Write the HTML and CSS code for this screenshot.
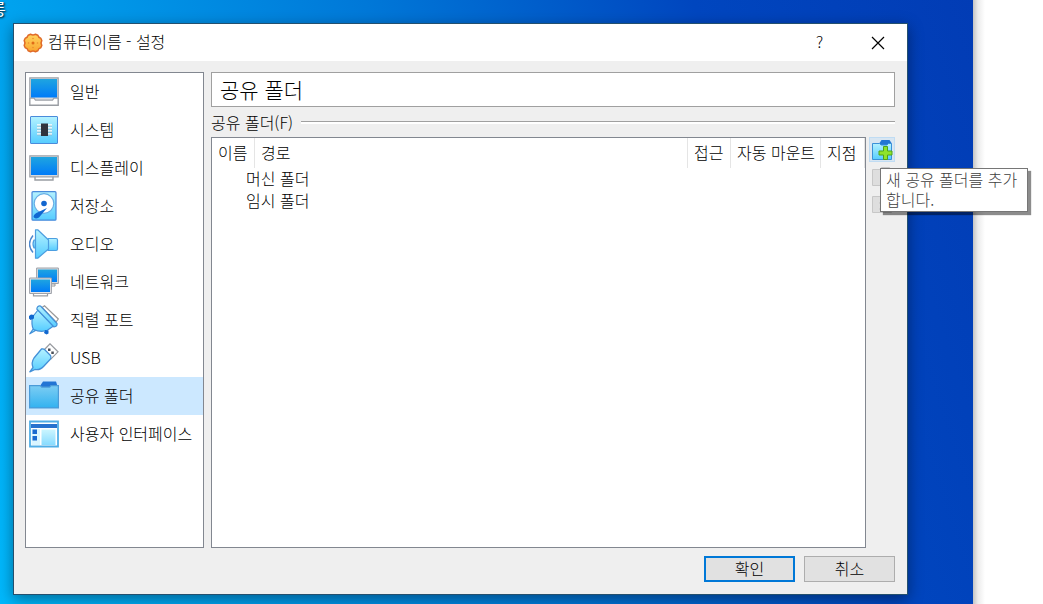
FILE: index.html
```html
<!DOCTYPE html>
<html lang="ko">
<head>
<meta charset="utf-8">
<title>컴퓨터이름 - 설정</title>
<link rel="stylesheet" href="styles.css">
</head>
<body>
<svg class="defs" aria-hidden="true">
  <defs>
    <linearGradient id="screen" x1="0" y1="0" x2="0" y2="1"><stop offset="0" stop-color="#1fa5e0"/><stop offset="1" stop-color="#007bf8"/></linearGradient>
    <linearGradient id="cyan" x1="0" y1="0" x2="0" y2="1"><stop offset="0" stop-color="#b5f2ff"/><stop offset="1" stop-color="#55ccff"/></linearGradient>
    <linearGradient id="folder" x1="0" y1="0" x2="0" y2="1"><stop offset="0" stop-color="#7dcdf3"/><stop offset="1" stop-color="#32b2f0"/></linearGradient>
    <linearGradient id="gear" x1="0" y1="0" x2="0" y2="1"><stop offset="0" stop-color="#ffd45f"/><stop offset="1" stop-color="#f9a52e"/></linearGradient>
  </defs>
</svg>
<div class="screen">
  <div class="desktop">
    <span class="shortcut">롱</span>
    <section class="dialog" role="dialog" aria-labelledby="title">
      <header class="titlebar">
        <svg class="gear" viewBox="0 0 20 20"><path d="M7.500 1.200Q10 2.800 12.500 1.200L14.800 2.200Q15.300 4.700 17.800 5.200L18.800 7.500Q17.200 10 18.800 12.500L17.800 14.800Q15.300 15.300 14.800 17.800L12.500 18.800Q10 17.200 7.500 18.800L5.200 17.800Q4.700 15.300 2.200 14.800L1.200 12.500Q2.800 10 1.200 7.500L2.200 5.200Q4.700 4.700 5.200 2.200z" fill="url(#gear)" stroke="#e06a28" stroke-width="1.500" stroke-linejoin="round"/><circle cx="10" cy="10" r="1.500" fill="#e06c18"/><g fill="#eb8d2b"><circle cx="10" cy="5.500" r=".8"/><circle cx="10" cy="14.500" r=".8"/><circle cx="5.500" cy="10" r=".8"/><circle cx="14.500" cy="10" r=".8"/></g></svg>
        <h1 class="title" id="title">컴퓨터이름 - 설정</h1>
        <button class="caption-button" type="button" aria-label="도움말"><span class="help">?</span></button>
        <button class="caption-button" type="button" aria-label="닫기"><svg width="14" height="14" viewBox="0 0 14 14"><path d="M1 1l12 12M13 1L1 13" stroke="#000" stroke-width="1.2"/></svg></button>
      </header>
      <div class="content">
        <nav class="categories">
          <button class="category" type="button"><svg class="icon" viewBox="0 0 30 30"><path d="M.8 21v7.2h28.4V21" fill="#fff" stroke="#999da3" stroke-width="1.4"/><path d="M.8.8h28.4v20.4H25l-1.500 2h-17l-1.500-2H.8z" fill="#d7dade" stroke="#9ea2a9" stroke-width="1.2"/><path d="M2 2h26v18.500H2z" fill="url(#screen)"/></svg><span>일반</span></button>
          <button class="category" type="button"><svg class="icon" viewBox="0 0 30 30"><rect x="1.500" y="1.500" width="27" height="27" rx=".5" fill="url(#cyan)" stroke="#4a8bdb"/><path d="M8 10h15M8 13h15M8 16h15M8 19h15" stroke="#fff" stroke-width="1.500"/><path d="M8 11h15M8 14h15M8 17h15M8 20h15" stroke="#9aa8b5" stroke-width=".6"/><path d="M12 8.500h7v12.500h-7z" fill="#30343e"/></svg><span>시스템</span></button>
          <button class="category" type="button"><svg class="icon" viewBox="0 0 30 30"><path d="M6 22v5h18v-5" fill="#fff" stroke="#999da3" stroke-width="1.4"/><path d="M.8 2.800h28.400v21H.8z" fill="#d7dade" stroke="#9ea2a9" stroke-width="1.2"/><path d="M2 4h26v18H2z" fill="url(#screen)"/></svg><span>디스플레이</span></button>
          <button class="category" type="button"><svg class="icon" viewBox="0 0 30 30"><rect x="3" y=".7" width="24" height="28.500" rx="1" fill="url(#cyan)" stroke="#4a8bdb" stroke-width="1.2"/><circle cx="15" cy="12.500" r="9.800" fill="#fff" stroke="#68aee5" stroke-width="1.2"/><circle cx="15" cy="12.500" r="2.800" fill="#1266cf"/><path d="M18 17l-8 9.500q-4 2-5.500-.5 0-3 5-5z" fill="#0f67d2"/></svg><span>저장소</span></button>
          <button class="category" type="button"><svg class="icon" viewBox="0 0 30 30"><g fill="url(#cyan)" stroke="#4c9ee0" stroke-width="1.200" stroke-linejoin="round"><path d="M6.500 11H5q-2 4 0 8h1.500z"/><path d="M19 9.500h8q1.500 0 1.500 1.500v9q0 1.500-1.500 1.500h-8z"/><path d="M6.500.8h2.200L19.500 11v9L8.700 29.200H6.500z"/></g><path d="M4 6.500q-7 8.500 0 17" fill="none" stroke="#4b86cd" stroke-width="1.400"/></svg><span>오디오</span></button>
          <button class="category" type="button"><svg class="icon" viewBox="0 0 30 30"><path d="M21 17h5v2h-5z" fill="#fff" stroke="#999"/><path d="M7.600 1h21.800v15.500H7.600z" fill="#d7dade" stroke="#9ea2a9"/><path d="M9 2.500h19V15H9z" fill="url(#screen)"/><path d="M4.500 26v2.800h14V26" fill="#fff" stroke="#999da3" stroke-width="1.200"/><path d="M.6 11h21.800v15.500H.6z" fill="#e3e5e8" stroke="#9ea2a9"/><path d="M2 12.500h19V25H2z" fill="url(#screen)"/></svg><span>네트워크</span></button>
          <button class="category" type="button"><svg class="icon" viewBox="0 0 30 30"><path d="M13 2.500L15.500.8 29.300 14l-2.300 3z" fill="#fff" stroke="#999" stroke-width="1.200"/><g fill="url(#cyan)" stroke="#4390d8" stroke-width="1.200" stroke-linejoin="round"><path d="M.8 28.800l3.700-5.300 2 2z"/><path d="M9 5L3.500 12q-1.500 8 1 12.500 7 3 13.500 1l6.500-4.500z"/><path d="M7.800 4q.5-3.500 3.700-3l16.500 17.500q.5 3-3 3.500z"/></g><path d="M2 9.500l3 .5v3.500L1.500 15 0 13.500V11zM16 25l3.500.5v3L17.500 29.500 15 28z" fill="#1168cf"/></svg><span>직렬 포트</span></button>
          <button class="category" type="button"><svg class="icon" viewBox="0 0 30 30"><path d="M14.500 7.500L21 .8l8 8-7 7z" fill="#fff" stroke="#96999e" stroke-width="1.200"/><path d="M19 5.500h2.500V8H19zM22.300 8.500h2.500V11h-2.500z" fill="#4a4f57"/><path d="M.8 28.800L4 24.500q-2-5 1-9.500l7.500-9q2-.5 3 .5l6 6q1 2 0 3.500L15 23q-4 4.500-9 3.500z" fill="url(#cyan)" stroke="#4390d8" stroke-width="1.300" stroke-linejoin="round"/></svg><span>USB</span></button>
          <button class="category selected" type="button" aria-current="page"><svg class="icon" viewBox="0 0 30 30"><path d="M11 5l3-4.500h13L28.500 5v3H11z" fill="#2375d4"/><path d="M.6 4.600h10.600l1.500 1.500h8L22 4.600h7.400v22.300H.6z" fill="url(#folder)" stroke="#4b9bd8" stroke-width="1.200"/></svg><span>공유 폴더</span></button>
          <button class="category" type="button"><svg class="icon" viewBox="0 0 30 30"><path d="M1 2.500h28v25H1z" fill="#fff" stroke="#50aee6" stroke-width="1.800"/><path d="M2 5h26v4H2z" fill="#2772ce"/><path d="M2.500 10h8.500v16H2.500z" fill="#d9f5ff"/><path d="M3.500 10.500h4.500V15H3.500zM3.500 17h4.500v4.500H3.500z" fill="#1769cf"/><path d="M12.500 10.500H26.500V26h-14z" fill="url(#cyan)" opacity=".7"/></svg><span>사용자 인터페이스</span></button>
        </nav>
        <main class="page">
          <h2 class="page-title">공유 폴더</h2>
          <section class="group">
            <h3 class="group-title">공유 폴더(F)</h3>
            <div class="group-body">
              <div class="list">
                <table class="folders">
                  <colgroup><col class="col-name"><col><col class="col-access"><col class="col-auto"><col class="col-point"></colgroup>
                  <thead><tr><th>이름</th><th>경로</th><th>접근</th><th>자동 마운트</th><th>지점</th></tr></thead>
                  <tbody>
                    <tr><td colspan="5">머신 폴더</td></tr>
                    <tr><td colspan="5">임시 폴더</td></tr>
                  </tbody>
                </table>
              </div>
              <div class="tools">
                <button class="tool active" type="button" aria-label="추가" aria-describedby="tip"><svg viewBox="0 0 22 22"><path d="M8.500 4l2-3h8l2 3v3h-12z" fill="#2375d4"/><path d="M1.500 4.500h7L10 6h6l1.500-1.500h3v16h-19z" fill="url(#cyan)" stroke="#3b91d8"/><path d="M12.500 7.500h4v4.500H21v4h-4.500v4.500h-4V16H8v-4h4.500z" fill="#8fe32c" stroke="#4fa31b"/></svg></button>
                <button class="tool" type="button" aria-label="편집" disabled><svg viewBox="0 0 22 22"><path d="M8.500 4l2-3h8l2 3z" fill="#c5c5c5"/><path d="M1.500 3.500h19v16h-19z" fill="#dedede" stroke="#c7c7c7"/></svg></button>
                <button class="tool" type="button" aria-label="삭제" disabled><svg viewBox="0 0 22 22"><path d="M8.500 4l2-3h8l2 3z" fill="#c5c5c5"/><path d="M1.500 3.500h19v16h-19z" fill="#dedede" stroke="#c7c7c7"/><path d="M9 9l8 8m0-8l-8 8" stroke="#c7c7c7" stroke-width="3"/></svg></button>
                <div class="tooltip" id="tip" role="tooltip">새 공유 폴더를 추가<br>합니다.</div>
              </div>
            </div>
          </section>
        </main>
      </div>
      <footer class="actions">
        <button class="action primary" type="button">확인</button>
        <button class="action" type="button">취소</button>
      </footer>
    </section>
  </div>
  <div class="margin"></div>
</div>
</body>
</html>
```
FILE: styles.css
```css
* { box-sizing: border-box; }
body {
  margin: 0;
  background: #fff;
  color: #000;
  font: 300 16px/20px "Noto Sans CJK KR", sans-serif;
}
button {
  padding: 0;
  border: 0;
  background: none;
  color: inherit;
  font: inherit;
}
h1, h2, h3 { margin: 0; font-weight: 300; }
svg { display: block; flex: none; }
.defs { position: absolute; width: 0; height: 0; }

.screen { display: flex; min-height: 100vh; }
.desktop {
  position: relative;
  flex: 1;
  display: flex;
  padding: 23px 65px 9px 13px;
  background: linear-gradient(72deg, #00b8fc 0%, #009fec 20%, #0078d8 48%, #0046bf 76%, #023cb5 100%);
}
.margin {
  width: 70px;
  background: linear-gradient(90deg, #c4c4c4, #ececec 5px, #fff 12px);
}
.shortcut {
  position: absolute;
  left: -9px;
  top: -2px;
  color: #fff;
  font-weight: 400;
  text-shadow: 1px 1px 2px #000;
}

.dialog {
  flex: 1;
  display: flex;
  flex-direction: column;
  border: 1px solid #24506e;
  background: #efefef;
  box-shadow: 0 4px 14px rgba(0, 0, 0, .4);
}
.titlebar {
  display: flex;
  align-items: center;
  height: 37px;
  padding-left: 9px;
  background: #fff;
}
.gear { width: 20px; height: 20px; }
.title { flex: 1; padding: 0 0 4px 5px; font-size: 16px; line-height: 20px; }
.caption-button {
  display: grid;
  place-items: center;
  width: 57px;
  height: 37px;
}
.caption-button:last-child { width: 59px; }
.help { padding-bottom: 3px; }

.content {
  flex: 1;
  display: flex;
  gap: 7px;
  padding: 11px 12px 0 11px;
}
.categories {
  width: 179px;
  border: 1px solid #828790;
  background: #fff;
}
.category {
  display: flex;
  align-items: center;
  gap: 11px;
  width: 100%;
  height: 38px;
  padding-left: 3px;
  text-align: left;
  white-space: nowrap;
}
.category span { padding-bottom: 2px; }
.icon { width: 30px; height: 30px; }
.selected { background: #cce8ff; }

.page { flex: 1; display: flex; flex-direction: column; }
.page-title {
  height: 35px;
  padding-left: 8px;
  border: 1px solid #a0a0a0;
  background: #fff;
  font-size: 21px;
  line-height: 32px;
}
.group { flex: 1; display: flex; flex-direction: column; }
.group-title {
  display: flex;
  align-items: center;
  gap: 8px;
  height: 30px;
  font-size: 16px;
}
.group-title::after {
  content: "";
  flex: 1;
  height: 2px;
  border-top: 1px solid #a0a0a0;
  background: #fff;
}
.group-body { flex: 1; display: flex; gap: 3px; }
.list { flex: 1; border: 1px solid #828790; background: #fff; }
.folders {
  width: 100%;
  table-layout: fixed;
  border-collapse: separate;
  border-spacing: 0;
}
.col-name { width: 43px; }
.col-access { width: 43px; }
.col-auto { width: 90px; }
.col-point { width: 44px; }
.folders th {
  height: 30px;
  padding: 0 0 2px 6px;
  border-right: 1px solid #e5e5e5;
  font-weight: 300;
  text-align: left;
  white-space: nowrap;
}
.folders td { height: 22px; padding: 0 0 2px 34px; }

.tools {
  position: relative;
  display: flex;
  flex-direction: column;
  gap: 2px;
  width: 26px;
}
.tool {
  display: grid;
  place-items: center;
  height: 25px;
}
.tool svg { width: 22px; height: 22px; }
.active { border: 1px solid #c0dcf3; background: #d8e6f2; }
.tooltip {
  position: absolute;
  left: 11px;
  top: 31px;
  width: 148px;
  padding: 0 5px 2px;
  border: 1px solid #767676;
  background: #fff;
  box-shadow: 3px 3px 1px rgba(0, 0, 0, .45);
  color: #404040;
  white-space: nowrap;
}

.actions {
  display: flex;
  justify-content: flex-end;
  gap: 9px;
  padding: 8px 12px 12px;
}
.action {
  width: 91px;
  height: 26px;
  padding-bottom: 2px;
  border: 1px solid #adadad;
  background: #e1e1e1;
}
.primary { border: 2px solid #0078d7; }
```
